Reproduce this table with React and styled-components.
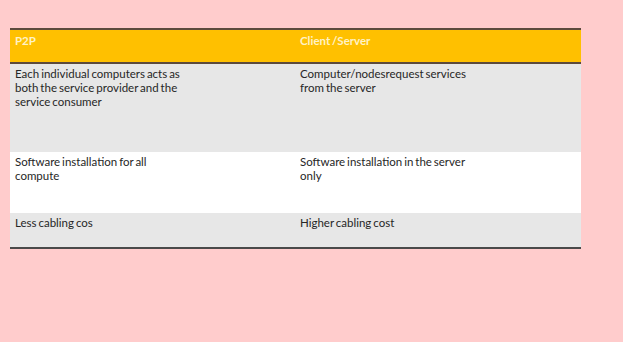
import React from "react";
import styled, { createGlobalStyle } from "styled-components";

const Global = createGlobalStyle`
  html, body { margin: 0; padding: 0; background: #ffcccc; }
  body { font-family: "Lato", "Liberation Sans", sans-serif; }
`;

const Page = styled.div`
  width: 623px;
  height: 342px;
  background: #ffcccc;
  padding: 28px 0 0 10px;
  box-sizing: border-box;
`;

const Table = styled.div`
  width: 571px;
  display: grid;
  grid-template-columns: 285px 1fr;
  border-top: 2px solid #5c4a3c;
  border-bottom: 2px solid #4a4a4a;
`;

const Row = styled.div`
  display: contents;
`;

const Cell = styled.div`
  height: ${(p) => p.h}px;
  box-sizing: border-box;
  padding: 3px 5px 0 5px;
  background: ${(p) => p.bg};
  color: #262626;
  font-size: 11.5px;
  line-height: 14px;
  word-spacing: -1px;
  white-space: pre-line;
  border-bottom: ${(p) => (p.divider ? "2px solid #5c4a3c" : "none")};
`;

const HeadCell = styled(Cell)`
  color: #fff2c6;
  font-weight: 700;
  padding-top: 4px;
`;

const rows = [
  {
    h: 88,
    bg: "#e7e7e7",
    a: "Each individual computers acts as\nboth the service provider and the\nservice consumer",
    b: "Computer/nodesrequest services\nfrom the server",
  },
  {
    h: 61,
    bg: "#ffffff",
    a: "Software installation for all\ncompute",
    b: "Software installation in the server\nonly",
  },
  {
    h: 34,
    bg: "#e7e7e7",
    a: "Less cabling cos",
    b: "Higher cabling cost",
  },
];

export default function App() {
  return (
    <>
      <Global />
      <Page>
        <Table>
          <Row>
            <HeadCell h={34} bg="#ffc000" divider>P2P</HeadCell>
            <HeadCell h={34} bg="#ffc000" divider>Client /Server</HeadCell>
          </Row>
          {rows.map((r, i) => (
            <Row key={i}>
              <Cell h={r.h} bg={r.bg}>{r.a}</Cell>
              <Cell h={r.h} bg={r.bg}>{r.b}</Cell>
            </Row>
          ))}
        </Table>
      </Page>
    </>
  );
}
